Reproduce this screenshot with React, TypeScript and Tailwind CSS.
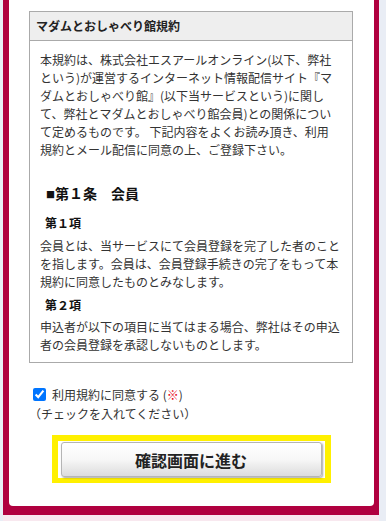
import React from "react";

export default function App() {
  return (
    <div
      className="min-h-screen bg-[#e9edf5] pl-[3px] pr-[7px] text-[#333]"
      style={{ fontFamily: '"Noto Sans CJK JP", "Noto Sans", sans-serif' }}
    >
      <div className="bg-[#b0003f] pl-[6px] pr-[5px] pb-[9px]">
        <div className="bg-white rounded-b-[4px] pt-[11px] pb-[23px] pl-[20px] pr-[21px]">
          {/* Terms box */}
          <div className="border border-[#aaa]">
            <div className="bg-[#eee] border-b border-[#aaa] pl-[6px] h-[29px] flex items-center text-[12px] font-bold text-[#222]">
              マダムとおしゃべり館規約
            </div>
            <div className="pt-[10px] pb-[8px] pl-[10px] pr-[12px] text-[12px] leading-[18px]">
              <p>
                本規約は、株式会社エスアールオンライン(以下、弊社という)が運営するインターネット情報配信サイト『マダムとおしゃべり館』(以下当サービスという)に関して、弊社とマダムとおしゃべり館会員)との関係について定めるものです。 下記内容をよくお読み頂き、利用規約とメール配信に同意の上、ご登録下さい。
              </p>
              <h3 className="mt-[23px] pl-[6px] text-[14px] leading-[22px] font-bold text-[#111]">
                <span className="text-[9px] align-[1px]">■</span>第１条　会員
              </h3>
              <h4 className="mt-[8px] pl-[5px] text-[12px] leading-[18px] font-bold text-[#111]">第１項</h4>
              <p className="mt-[5px]">
                会員とは、当サービスにて会員登録を完了した者のことを指します。会員は、会員登録手続きの完了をもって本規約に同意したものとみなします。
              </p>
              <h4 className="mt-[5px] pl-[5px] text-[12px] leading-[18px] font-bold text-[#111]">第２項</h4>
              <p className="mt-[4px]">
                申込者が以下の項目に当てはまる場合、弊社はその申込者の会員登録を承認しないものとします。
              </p>
            </div>
          </div>

          {/* Agreement */}
          <div className="mt-[22px] text-[12px] leading-[19px]">
            <label className="flex items-center">
              <input type="checkbox" defaultChecked className="w-[13px] h-[13px] ml-[4px] mr-[6px]" />
              <span>
                利用規約に同意する (<span className="text-[#e60012]">※</span>)
              </span>
            </label>
            <div>（チェックを入れてください）</div>
          </div>

          {/* Submit */}
          <div className="mt-[12px] flex justify-center">
            <div className="w-[279px] border-[6px] border-b-[5px] border-[#fff000] px-[3px] py-[1px]">
              <button
                type="button"
                className="w-full h-[35px] rounded-[3px] border border-[#b5b5b5] bg-gradient-to-b from-white via-[#f7f7f7] to-[#dcdcdc] shadow-[1px_1px_2px_rgba(0,0,0,0.35)] text-[16px] font-bold text-[#222]"
              >
                確認画面に進む
              </button>
            </div>
          </div>
        </div>
      </div>
      <div className="bg-[#f8e8ef] h-[8px]" />
    </div>
  );
}
